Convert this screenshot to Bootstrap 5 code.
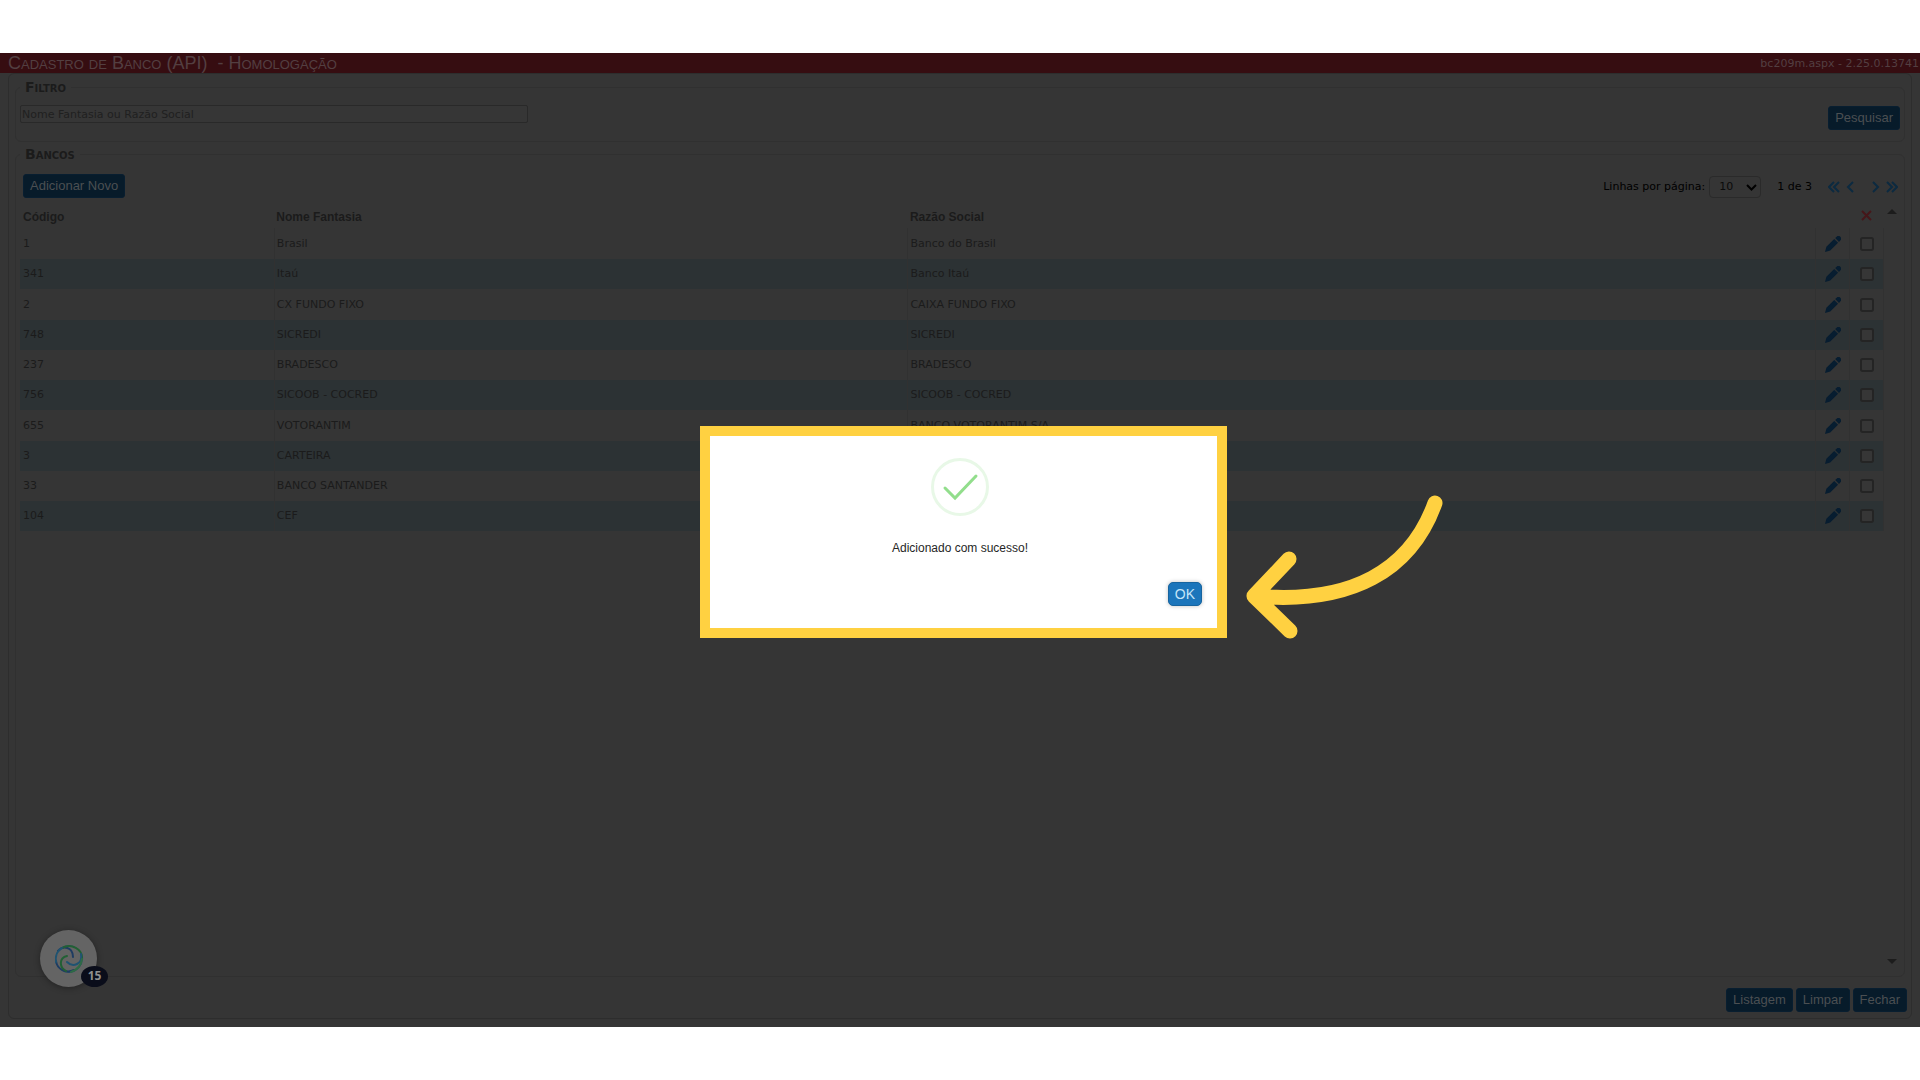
<!DOCTYPE html>
<html lang="pt-BR">
<head>
<meta charset="utf-8">
<meta name="viewport" content="width=device-width, initial-scale=1">
<title>Cadastro de Banco (API) - Homologação</title>
<link href="https://cdn.jsdelivr.net/npm/bootstrap@5.3.0/dist/css/bootstrap.min.css" rel="stylesheet">
<script src="https://cdn.jsdelivr.net/npm/bootstrap@5.3.0/dist/js/bootstrap.bundle.min.js"></script>
<style>
  :root { --ui: "Liberation Sans", Arial, sans-serif; --data: "DejaVu Sans", Verdana, sans-serif; --line: #2d2d2d; --ink: #1b1b1b; }
  body { background: #fff; font: 11px/14px var(--data); color: var(--ink); padding: 53px 0; }
  .app { background: #353535; }
  .topbar { background: #360d11; color: #533f41; height: 20px; padding: 0 1px 0 8px; }
  .topbar h1 { font: small-caps 18px/20px var(--ui); white-space: pre; }
  .topbar span { line-height: 16px; padding-top: 3px; }
  .panel { border: 1px solid var(--line); border-radius: 6px; margin: 0 8px 8px; padding: 6px; }
  .group { border: 1px solid #303030; border-radius: 6px; padding: 0 4px; }
  .group legend { float: none; width: auto; font: bold small-caps 14px/14px var(--data); padding: 0 5px; margin: 0; }
  .group-list { margin-top: 5px; }
  .search { padding: 11px 0; }
  .search .btn { margin-top: 1px; }
  .search input { width: 27%; min-width: 200px; height: 18px; background: #363636; color: var(--ink); border: 1px solid #292929; border-radius: 2px; padding: 0 1px; font: 11px/14px var(--data); }
  .search input::placeholder { color: #202020; opacity: 1; }
  .action { --bs-btn-font-family: var(--ui); --bs-btn-font-size: 13px; --bs-btn-line-height: 16px; --bs-btn-padding-x: 6px; --bs-btn-padding-y: 3px; --bs-btn-border-radius: 3px; --bs-btn-bg: #071b2a; --bs-btn-color: #4b4f52; --bs-btn-border-color: #081e30; --bs-btn-hover-bg: #0a2439; --bs-btn-hover-color: #4b4f52; }
  .toolbar { margin: 13px 0 5px; padding: 0 2px 0 3px; }
  .pager { color: #000; padding-top: 2px; }
  .pager select { width: 52px; height: 22px; padding: 0 0 0 9px; font: 11px/14px var(--data); color: #0a0a0a; background-color: #353535; border: 1px solid #2a2a2a; border-radius: 4px; background-position: right 3px center; background-size: 11px; }
  .pager .form-select { background-image: url("data:image/svg+xml,%3csvg xmlns='http://www.w3.org/2000/svg' viewBox='0 0 11 11'%3e%3cpath fill='none' stroke='%23000' stroke-width='2' d='M1 3l4.500 4.500L10 3'/%3e%3c/svg%3e"); }
  .steps { gap: 6px; }
  .step { border: 0; background: none; padding: 0; line-height: 0; }
  .step-prev { margin-right: 12px; }
  .glyph-line { fill: none; stroke: #0c2a40; stroke-width: 2; }
  .list-area { min-height: calc(100vh - 310px); }
  .banks { table-layout: fixed; border-collapse: collapse; }
  .banks th { font: bold 12px/14px var(--ui); height: 25px; padding: 3px 3px 0; }
  .banks td { height: 30px; padding: 0 2px; border-right: 1px solid #313131; }
  .banks td:first-child { padding-left: 3px; }
  .banks th + th { padding-left: 2px; }
  .banks tr:first-child td, .banks tr:nth-child(4n+3) td { height: 31px; }
  .banks tbody tr:nth-child(even) { background: #2c3234; }
  .banks .tool { text-align: center; padding: 0; line-height: 0; }
  .banks input { margin: 0; width: 14px; height: 14px; min-height: 0; background-color: #363636; border: 2px solid #242424; border-radius: 3px; vertical-align: middle; }
  .rail { width: 16px; padding: 6px 0 9px; line-height: 0; }
  .footer { padding-top: 11px; gap: 3px; margin-right: -2px; }
  .veil { padding: 373px 0 0 7px; }
  .notice { width: 527px; height: 212px; background: #fff; border: 10px solid #ffd141; padding: 22px 15px 22px 8px; }
  .notice p { font: 12px/16px var(--ui); color: #262626; margin: 0; }
  .confirm { --bs-btn-bg: #1b75bb; --bs-btn-color: #c3e4f8; --bs-btn-border-color: #17649f; --bs-btn-border-radius: 5px; --bs-btn-font-size: 14px; box-shadow: 0 0 4px rgba(0,0,0,.25); }
  .pointer { left: calc(50% + 280px); top: 435px; }
  .chat { left: 40px; bottom: 40px; width: 57px; height: 57px; background: #646464; border: 0; box-shadow: 0 1px 6px rgba(0,0,0,.35); padding: 0; }
  .chat .count { left: 41px; top: 36px; width: 27px; height: 21px; border-radius: 50%; background: #0a0d1a; color: #8f8f8f; font: bold 12px/20px "Open Sans", sans-serif; }
</style>
</head>
<body class="min-vh-100 d-flex flex-column">
<svg class="d-none" aria-hidden="true">
  <symbol id="pen" viewBox="0 0 16 16"><path fill="#071d30" d="M9.200 2.900 13.100 6.800 5.200 14.600 0 16l1.400-5.300zM10.200 2 11.600.700a2.200 2.200 0 0 1 3.700 3.700L14 5.900z"/></symbol>
</svg>
<div class="app position-relative flex-grow-1 d-flex flex-column">
  <header class="topbar d-flex justify-content-between">
    <h1 class="m-0">Cadastro de Banco (API)  - Homologação</h1>
    <span>bc209m.aspx - 2.25.0.13741</span>
  </header>
  <main class="panel flex-grow-1 d-flex flex-column">
    <fieldset class="group">
      <legend>Filtro</legend>
      <form class="search d-flex justify-content-between align-items-start">
        <input type="text" aria-label="Nome Fantasia ou Razão Social" placeholder="Nome Fantasia ou Razão Social">
        <button type="button" class="btn action">Pesquisar</button>
      </form>
    </fieldset>
    <fieldset class="group group-list flex-grow-1">
      <legend>Bancos</legend>
      <div class="toolbar d-flex justify-content-between align-items-center">
        <button type="button" class="btn action">Adicionar Novo</button>
        <div class="pager d-flex align-items-center">
          <label for="rows" class="me-1">Linhas por página:</label>
          <select id="rows" class="form-select me-3"><option>10</option><option>20</option></select>
          <span class="me-3">1 de 3</span>
          <div class="steps d-flex">
            <button type="button" class="step" aria-label="Primeira"><svg width="12" height="12"><path class="glyph-line" d="M6 1 1 6l5 5M11 1 6 6l5 5"/></svg></button>
            <button type="button" class="step step-prev" aria-label="Anterior"><svg width="8" height="12"><path class="glyph-line" d="M7 1 2 6l5 5"/></svg></button>
            <button type="button" class="step" aria-label="Próxima"><svg width="8" height="12"><path class="glyph-line" d="m1 1 5 5-5 5"/></svg></button>
            <button type="button" class="step" aria-label="Última"><svg width="12" height="12"><path class="glyph-line" d="m1 1 5 5-5 5M6 1l5 5-5 5"/></svg></button>
          </div>
        </div>
      </div>
      <div class="list-area d-flex">
        <div class="flex-grow-1">
        <table class="banks w-100">
          <colgroup><col style="width:13.650%"><col style="width:34%"><col><col style="width:34px"><col style="width:34px"></colgroup>
          <thead><tr><th scope="col">Código</th><th scope="col">Nome Fantasia</th><th scope="col">Razão Social</th><th></th><th class="tool" scope="col"><svg width="11" height="11" role="img" aria-label="Excluir"><path d="m1 1 9 9m0-9-9 9" stroke="#46171a" stroke-width="2"/></svg></th></tr></thead>
          <tbody>
            <tr><td>1</td><td>Brasil</td><td>Banco do Brasil</td><td class="tool"><a href="#" aria-label="Editar"><svg width="16" height="16"><use href="#pen"/></svg></a></td><td class="tool"><input class="form-check-input" type="checkbox" aria-label="Excluir 1"></td></tr>
            <tr><td>341</td><td>Itaú</td><td>Banco Itaú</td><td class="tool"><a href="#" aria-label="Editar"><svg width="16" height="16"><use href="#pen"/></svg></a></td><td class="tool"><input class="form-check-input" type="checkbox" aria-label="Excluir 341"></td></tr>
            <tr><td>2</td><td>CX FUNDO FIXO</td><td>CAIXA FUNDO FIXO</td><td class="tool"><a href="#" aria-label="Editar"><svg width="16" height="16"><use href="#pen"/></svg></a></td><td class="tool"><input class="form-check-input" type="checkbox" aria-label="Excluir 2"></td></tr>
            <tr><td>748</td><td>SICREDI</td><td>SICREDI</td><td class="tool"><a href="#" aria-label="Editar"><svg width="16" height="16"><use href="#pen"/></svg></a></td><td class="tool"><input class="form-check-input" type="checkbox" aria-label="Excluir 748"></td></tr>
            <tr><td>237</td><td>BRADESCO</td><td>BRADESCO</td><td class="tool"><a href="#" aria-label="Editar"><svg width="16" height="16"><use href="#pen"/></svg></a></td><td class="tool"><input class="form-check-input" type="checkbox" aria-label="Excluir 237"></td></tr>
            <tr><td>756</td><td>SICOOB - COCRED</td><td>SICOOB - COCRED</td><td class="tool"><a href="#" aria-label="Editar"><svg width="16" height="16"><use href="#pen"/></svg></a></td><td class="tool"><input class="form-check-input" type="checkbox" aria-label="Excluir 756"></td></tr>
            <tr><td>655</td><td>VOTORANTIM</td><td>BANCO VOTORANTIM S/A</td><td class="tool"><a href="#" aria-label="Editar"><svg width="16" height="16"><use href="#pen"/></svg></a></td><td class="tool"><input class="form-check-input" type="checkbox" aria-label="Excluir 655"></td></tr>
            <tr><td>3</td><td>CARTEIRA</td><td></td><td class="tool"><a href="#" aria-label="Editar"><svg width="16" height="16"><use href="#pen"/></svg></a></td><td class="tool"><input class="form-check-input" type="checkbox" aria-label="Excluir 3"></td></tr>
            <tr><td>33</td><td>BANCO SANTANDER</td><td></td><td class="tool"><a href="#" aria-label="Editar"><svg width="16" height="16"><use href="#pen"/></svg></a></td><td class="tool"><input class="form-check-input" type="checkbox" aria-label="Excluir 33"></td></tr>
            <tr><td>104</td><td>CEF</td><td></td><td class="tool"><a href="#" aria-label="Editar"><svg width="16" height="16"><use href="#pen"/></svg></a></td><td class="tool"><input class="form-check-input" type="checkbox" aria-label="Excluir 104"></td></tr>
          </tbody>
        </table>
        </div>
        <div class="rail flex-shrink-0 d-flex flex-column justify-content-between align-items-center">
          <svg width="10" height="5"><path fill="#1c1c1c" d="m0 5 5-5 5 5z"/></svg>
          <svg width="10" height="5"><path fill="#1c1c1c" d="m0 0 5 5 5-5z"/></svg>
        </div>
      </div>
    </fieldset>
    <footer class="footer d-flex justify-content-end">
      <button type="button" class="btn action">Listagem</button>
      <button type="button" class="btn action">Limpar</button>
      <button type="button" class="btn action">Fechar</button>
    </footer>
  </main>

  <button type="button" class="chat btn rounded-circle position-absolute d-flex align-items-center justify-content-center" aria-label="Abrir atendimento">
    <svg width="30" height="30" viewBox="0 0 30 30" fill="none" stroke-width="2" stroke-linecap="round">
      <circle cx="15" cy="15" r="13.500" stroke="#2a5068" stroke-width="1"/>
      <path stroke="#1e3c62" d="M4 7C9 1 19 3 19 13M2 17c1 8 10 13 18 9"/>
      <path stroke="#226034" d="M8 4c9-5 21 1 20 11M12 27C5 23 5 14 13 12"/>
      <path stroke="#1f5371" d="M27 10c2 10-8 14-14 8M2 18C1 11 4 6 8 4"/>
      <path stroke="#2f6a45" d="M28 15c-1 7-5 11-11 13"/>
    </svg>
    <span class="count position-absolute text-center">15</span>
  </button>

  <div class="veil position-absolute top-0 start-0 w-100 h-100 d-flex justify-content-center align-items-start">
    <section class="notice d-flex flex-column" role="dialog" aria-modal="true" aria-labelledby="notice-text">
      <svg class="align-self-center" width="58" height="58" fill="none"><circle cx="29" cy="29" r="27.500" stroke="#e8f8e7" stroke-width="3"/><path d="m14 30 10 10 21-22" stroke="#92de8c" stroke-width="3" stroke-linecap="round"/></svg>
      <p id="notice-text" class="text-center mt-4">Adicionado com sucesso!</p>
      <button type="button" class="btn action confirm align-self-end mt-auto">OK</button>
    </section>
    <svg class="pointer position-absolute" width="210" height="160" fill="none" stroke="#ffd141" stroke-width="15" stroke-linecap="round" stroke-linejoin="round" aria-hidden="true"><path d="M195 15C171 82 112 117 14 108M49 71 14 108l36 35"/></svg>
  </div>
</div>
</body>
</html>
